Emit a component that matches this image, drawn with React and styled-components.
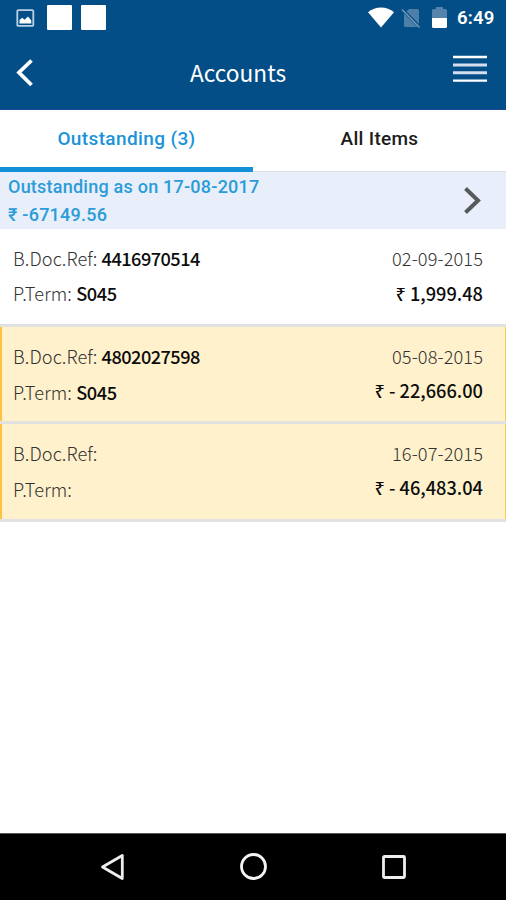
import React, {useState} from "react";
import styled, {createGlobalStyle} from "styled-components";

const GlobalStyle = createGlobalStyle`
    * {
        box-sizing: border-box;
    }
    body {
        margin: 0;
        background: #fff;
    }
    button {
        border: 0;
        padding: 0;
        background: none;
        font: inherit;
        color: inherit;
        cursor: pointer;
    }
    svg {
        display: block;
    }
`;

const Screen = styled.div`
    display: flex;
    flex-direction: column;
    width: 100%;
    height: 100vh;
    overflow: hidden;
    background: #fff;
    font-family: "Noto Sans CJK SC", "Noto Sans", sans-serif;
`;

const TopArea = styled.header`
    height: 110px;
    flex: none;
    background: #034e86;
    border-bottom: 1px solid #1b4a94;
    color: #fff;
`;

const StatusBar = styled.div`
    height: 36px;
    display: flex;
    justify-content: space-between;
    padding: 5px 11px 0 16px;
`;

const StatusGroup = styled.div`
    display: flex;
    height: 25px;
    align-items: center;
`;

const AppBlock = styled.span`
    width: 25px;
    height: 25px;
    border-radius: 1px;
    background: #fff;
    margin-left: ${props => props.$gap}px;
`;

const StatusIcons = styled.div`
    display: flex;
    align-items: center;
    svg + svg {
        margin-left: 7px;
    }
    svg:last-child {
        margin-left: 11px;
    }
`;

const Clock = styled.span`
    width: 38px;
    margin-left: 10px;
    padding-top: 2px;
    font: 600 18.5px/25px Roboto, sans-serif;
    letter-spacing: 0.2px;
    white-space: nowrap;
`;

const TitleBar = styled.div`
    height: 73px;
    display: grid;
    grid-template-columns: 60px 1fr 60px;
    align-items: center;
    h1 {
        margin: 0;
        padding-right: 30px;
        font-weight: 400;
        font-size: 22.7px;
        line-height: 30px;
        text-align: center;
    }
`;

const BackButton = styled.button`
    padding-left: 15px;
`;

const MenuButton = styled.button`
    margin: -7px 0 0 7px;
`;

const Tabs = styled.div`
    display: flex;
    flex: none;
    height: 62px;
    border-bottom: 1px solid #dcdfe8;
`;

const Tab = styled.button`
    flex: 1;
    height: 62px;
    padding-top: 1px;
    font: 500 19px/24px Roboto, sans-serif;
    letter-spacing: ${props => props.$spacing}px;
    color: ${props => (props.$active ? "#1a93d8" : "#1c1c1c")};
    border-bottom: 5px solid ${props => (props.$active ? "#1490d8" : "transparent")};
`;

const Summary = styled.div`
    display: flex;
    flex: none;
    height: 57px;
    align-items: center;
    justify-content: space-between;
    padding: 0 25px 0 8px;
    background: #e8eefa;
    color: #2a9cd9;
    font: 500 18px/28px Roboto, sans-serif;
    letter-spacing: 0.23px;
`;

const Item = styled.div`
    display: flex;
    flex: none;
    justify-content: space-between;
    height: ${props => props.$height}px;
    padding: 17px 23px 0 13px;
    border-bottom: 3px solid #e1e1e1;
    font-size: 18.2px;
    line-height: 24px;
    color: #0c0c0c;
    ${props => props.$credit && `
        background: #fff1cb;
        box-shadow: inset 2px 0 #fdc23f, inset -1px 0 #fbc850;
    `}
`;

const Column = styled.div`
    display: flex;
    flex-direction: column;
    gap: ${props => props.$gap}px;
    text-align: ${props => props.$align || "left"};
    white-space: pre;
`;

const Label = styled.span`
    font-weight: 300;
    letter-spacing: 0.1px;
    color: #333;
`;

const Value = styled.span`
    font-weight: 500;
    letter-spacing: ${props => props.$spacing || 0}px;
`;

const NavBar = styled.nav`
    display: flex;
    flex: none;
    height: 67px;
    margin-top: auto;
    padding: 0 42px;
    align-items: center;
    background: #000;
    border-top: 1px solid #555;
    button {
        flex: 1;
        display: flex;
        justify-content: center;
    }
`;

const PictureIcon = () => (
    <svg width="19" height="18" viewBox="0 0 19 18">
        <rect x="1.3" y="1.1" width="16" height="15.8" rx="1" fill="none" stroke="#b9d0e6" strokeWidth="1.8"/>
        <path d="M3.5 14.5V11l2.7-2.2 2.4 2 3.4-3.3 3.3 4v3z" fill="#fff"/>
    </svg>
);

const WifiIcon = () => (
    <svg width="26" height="22" viewBox="0 0 26 22">
        <path d="M0 5.2C7-1.2 19-1.2 26 5.2L13 20.5z" fill="#fff"/>
    </svg>
);

const NoSimIcon = () => (
    <svg width="20" height="20" viewBox="0 0 20 20">
        <path d="M8 1h8.5a1.5 1.5 0 0 1 1.5 1.5v13.5L5.5 3.5z" fill="#4d7fa9"/>
        <path d="M3 5.5 16.5 19H4.5A1.5 1.5 0 0 1 3 17.5z" fill="#4d7fa9"/>
        <path d="M1 1.5 18.5 19.5" stroke="#7698b9" strokeWidth="1.5"/>
    </svg>
);

const BatteryIcon = () => (
    <svg width="15" height="21" viewBox="0 0 15 21">
        <path d="M0 11V3.5Q0 2 1.5 2H4V0h7v2h2.5Q15 2 15 3.5V11z" fill="#5483ab"/>
        <path d="M0 11h15v8.5q0 1.5-1.5 1.5h-12Q0 21 0 19.5z" fill="#fff"/>
    </svg>
);

const items = [
    {ref: "4416970514", term: "S045", date: "02-09-2015", amount: "₹ 1,999.48", height: 98, gap: 11},
    {ref: "4802027598", term: "S045", date: "05-08-2015", amount: "₹ - 22,666.00", height: 97, gap: 12, credit: true},
    {ref: "", term: "", date: "16-07-2015", amount: "₹ - 46,483.04", height: 98, gap: 12, credit: true},
];

const App = () => {
    const [tab, setTab] = useState("outstanding");

    return (
        <>
            <GlobalStyle/>
            <Screen>
                <TopArea>
                    <StatusBar>
                        <StatusGroup>
                            <PictureIcon/>
                            <AppBlock $gap={12}/>
                            <AppBlock $gap={9}/>
                        </StatusGroup>
                        <StatusGroup>
                            <StatusIcons>
                                <WifiIcon/>
                                <NoSimIcon/>
                                <BatteryIcon/>
                            </StatusIcons>
                            <Clock>6:49</Clock>
                        </StatusGroup>
                    </StatusBar>
                    <TitleBar>
                        <BackButton aria-label="Back">
                            <svg width="19" height="30" viewBox="0 0 19 30">
                                <path d="M16.5 2.5 4 14.5 16.5 27" fill="none" stroke="#fff" strokeWidth="3.8"/>
                            </svg>
                        </BackButton>
                        <h1>Accounts</h1>
                        <MenuButton aria-label="Menu">
                            <svg width="34" height="28" viewBox="0 0 34 28">
                                <path d="M0 2h34M0 25.7h34" stroke="#fff" strokeWidth="2.3"/>
                                <path d="M0 10h34M0 17.7h34" stroke="#d5def0" strokeWidth="3"/>
                            </svg>
                        </MenuButton>
                    </TitleBar>
                </TopArea>

                <Tabs>
                    <Tab $active={tab === "outstanding"} $spacing={0.38} onClick={() => setTab("outstanding")}>
                        Outstanding (3)
                    </Tab>
                    <Tab $active={tab === "all"} $spacing={0.3} onClick={() => setTab("all")}>
                        All Items
                    </Tab>
                </Tabs>

                <Summary>
                    <div>
                        <div>Outstanding as on 17-08-2017</div>
                        <div>₹ -67149.56</div>
                    </div>
                    <svg width="17" height="28" viewBox="0 0 17 28">
                        <path d="M1.5 1.5 14 13.5 1.5 25.5" fill="none" stroke="#58595d" strokeWidth="4"/>
                    </svg>
                </Summary>

                {items.map((item) => (
                    <Item key={item.date} $height={item.height} $credit={item.credit}>
                        <Column $gap={item.gap}>
                            <div><Label>B.Doc.Ref: </Label><Value $spacing={-0.55}>{item.ref}</Value></div>
                            <div><Label>P.Term: </Label><Value $spacing={-0.4}>{item.term}</Value></div>
                        </Column>
                        <Column $gap={item.credit ? 10 : 11} $align="right">
                            <Label>{item.date}</Label>
                            <Value>{item.amount}</Value>
                        </Column>
                    </Item>
                ))}

                <NavBar>
                    <button aria-label="Back">
                        <svg width="24" height="28" viewBox="0 0 24 28">
                            <path d="M22.3 2.5v23L2.5 14z" fill="none" stroke="#eee" strokeWidth="2.8" strokeLinejoin="round"/>
                        </svg>
                    </button>
                    <button aria-label="Home">
                        <svg width="28" height="28" viewBox="0 0 28 28">
                            <circle cx="14.5" cy="13.5" r="12" fill="none" stroke="#f4f4f4" strokeWidth="2.8"/>
                        </svg>
                    </button>
                    <button aria-label="Recent">
                        <svg width="26" height="26" viewBox="0 0 26 26">
                            <rect x="2.5" y="2.5" width="21" height="21" rx="1" fill="none" stroke="#eee" strokeWidth="2.8"/>
                        </svg>
                    </button>
                </NavBar>
            </Screen>
        </>
    );
};

export default App;
